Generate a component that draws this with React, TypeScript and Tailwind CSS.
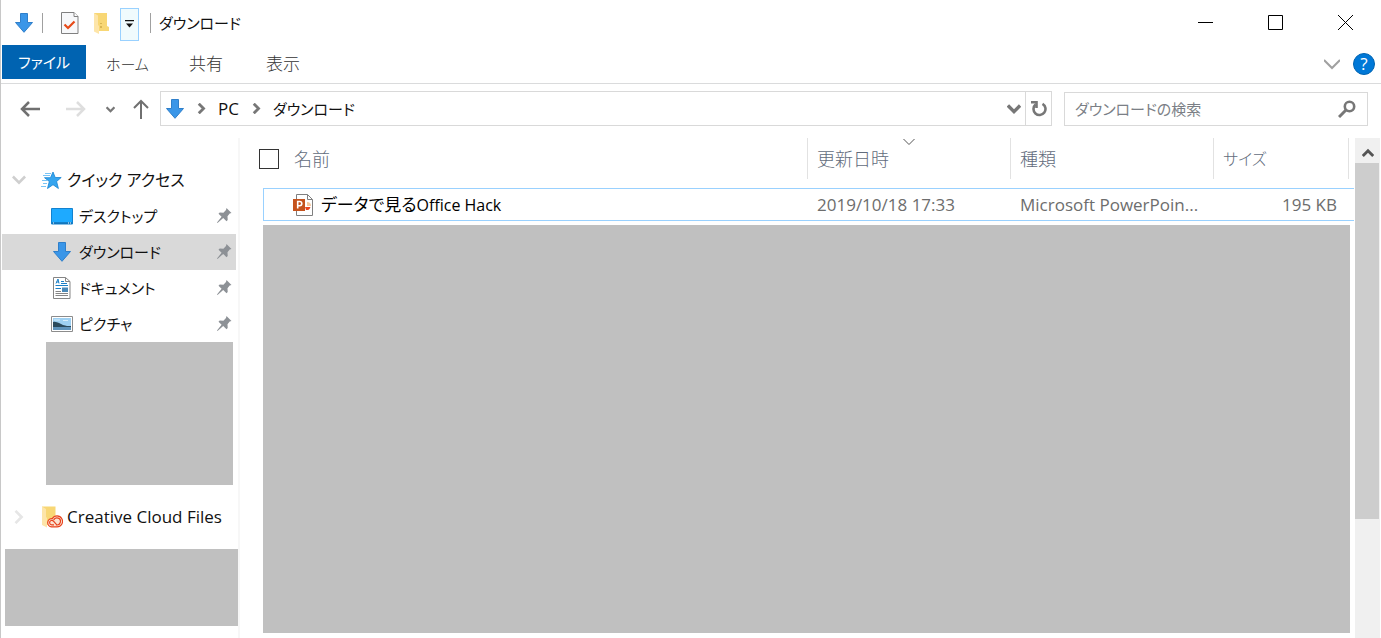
import type { ReactNode } from 'react'

const tabs = [
  { name: 'ホーム', size: 'w-[42px] text-[15px]' },
  { name: '共有', size: 'w-9 text-[17px]' },
  { name: '表示', size: 'w-9 text-[17px]' },
]

const DownloadIcon = () => (
  <svg className="h-5 w-[18px] shrink-0" viewBox="0 0 18 20">
    <path d="M5.5.5h7v9h5L9 19.3.5 9.5h5z" fill="#3a96e8" stroke="#2f7fca" />
  </svg>
)

const ChevronIcon = ({ d, size, color, stroke }: { d: string; size: string; color: string; stroke: number }) => (
  <svg className={`shrink-0 ${size} ${color}`} viewBox="0 0 16 16" fill="none" stroke="currentColor" strokeWidth={stroke}>
    <path d={d} />
  </svg>
)

const PropertiesIcon = () => (
  <svg className="h-[22px] w-[18px]" viewBox="0 0 18 22">
    <path d="M.5.5h12.5l4 4v17H.5z" fill="#f7f8fa" stroke="#808080" />
    <path d="M13 .5v4h4" fill="#fff" stroke="#808080" />
    <path d="m3.5 12.5 3.5 3.5 6.5-6.5" fill="none" stroke="#e64a19" strokeWidth="2.2" />
  </svg>
)

const FolderIcon = () => (
  <svg className="h-[22px] w-[15px]" viewBox="0 0 15 22">
    <path d="M0 1h13v13l2 1v4H4L0 19z" fill="#f8d775" />
    <path d="M0 1l4 2.5V13l1 1v8l-5-2.5z" fill="#fde5a9" />
    <path d="M7 11v1M7 14v2" stroke="#b79332" />
  </svg>
)

const CreativeCloudIcon = () => (
  <svg className="h-[22px] w-[21px]" viewBox="0 0 21 22">
    <path d="M0 .5h13.5V19H4z" fill="#f8d775" />
    <path d="M0 .5 4 3v8l1 1v9.5L0 19z" fill="#fde5a9" />
    <g fill="none" stroke="#e8441f" strokeWidth="1.2">
      <path d="M9.5 20.900a4 4 0 1 1 .8-8.300 5.500 5.500 0 1 1 4.700 8.300z" fill="#fbe3d2" />
      <path d="M12 18.800H9.800a2.200 2.200 0 1 1 1.900-3.300l3.100 3.300M11.700 14.100a3.500 3.500 0 1 1 2.300 4.700" />
    </g>
  </svg>
)

const StarIcon = () => (
  <svg className="h-5 w-[21px]" viewBox="0 0 21 20">
    <path d="m12 2 2.200 5.500h6l-4.600 4 1.800 7-5.400-3.800-5.500 3.800 1.800-7L3.500 7.700h6z" fill="#35a5ef" stroke="#1683d2" strokeWidth=".8" />
    <path d="M4 3.500h6M2 5.500h7M1 10.500h5M2 13.500h4M0 16.500h5" stroke="#79c4f5" />
  </svg>
)

const DesktopIcon = () => (
  <svg className="h-[17px] w-[22px]" viewBox="0 0 22 17">
    <path d="M.5.5h21v15.500H.5z" fill="#1eaaff" stroke="#1382cf" />
    <path d="M1 15h20" stroke="#0b5590" />
    <path d="M2 15h1M17 15h1M19 15h1" stroke="#fff" />
  </svg>
)

const DocumentIcon = () => (
  <svg className="h-[22px] w-[18px]" viewBox="0 0 18 22">
    <path d="M.5.5h12l4.500 4v17H.5z" fill="#fff" stroke="#858585" />
    <path d="M12.500.5v4H17" fill="none" stroke="#858585" />
    <path d="m3 6.500 2-4.500 1 4.500M3.500 5H6" fill="none" stroke="#1b7fc6" />
    <path d="M8 4.500h3M8 6.500h6M2.500 8.500H15M2.500 11.500H8" stroke="#1b7fc6" />
    <path d="M9 10.500h6v4.500H9z" fill="#4a89b8" />
    <path d="M2.500 14.500H8M2.500 16.500H15M2.500 18.500H15" stroke="#858585" />
  </svg>
)

const PictureIcon = () => (
  <svg className="h-4 w-[22px]" viewBox="0 0 22 16">
    <path d="M.5.5h21v15H.5z" fill="#fff" stroke="#8c8c8c" />
    <path d="M2 2h18v12H2z" fill="#9ed0f2" />
    <path d="M2 6c4-1 7 2 10 3s5 1 8 1v1.500H2z" fill="#2b4a5c" />
    <path d="M2 11h18v3H2z" fill="#5f93bb" />
    <path d="M3 4h6M12 4.500h5" stroke="#d8eefb" />
  </svg>
)

const PinIcon = () => (
  <svg className="h-4 w-[15px]" viewBox="0 0 15 16">
    <path d="m9.500 0 5 5-1.800.6-2.200 2.600.2 3.800-1.200 1.200-3.300-3.300L.5 15l-.5-.5 4.600-5.700L1.500 5.700 2.700 4.500l3.700.2L9 2z" fill="#8d9196" />
  </svg>
)

const PowerPointIcon = () => (
  <svg className="h-[22px] w-5 shrink-0" viewBox="0 0 20 22">
    <path d="M3.500.5h11l5 5v16h-16z" fill="#fff" stroke="#7f7f7f" />
    <path d="M14.500.5v5h5" fill="none" stroke="#7f7f7f" />
    <path d="M14 8a4 4 0 0 1 4 4h-4z" fill="#f6c9a0" />
    <path d="M12 13h5.500a4 4 0 0 1-4.500 3z" fill="#e8441f" />
    <path d="M0 5h12v12H0z" fill="#c5531d" />
    <path d="M4.700 14.500v-7h2a2 2 0 0 1 0 4.200h-2" fill="none" stroke="#fff" strokeWidth="1.600" />
  </svg>
)

const quickAccess: { name: string; icon: ReactNode; active?: boolean }[] = [
  { name: 'デスクトップ', icon: <DesktopIcon /> },
  { name: 'ダウンロード', icon: <DownloadIcon />, active: true },
  { name: 'ドキュメント', icon: <DocumentIcon /> },
  { name: 'ピクチャ', icon: <PictureIcon /> },
]

const TitleBar = () => (
  <header className="flex h-[45px] items-center pr-px">
    <div className="ml-[14px] flex flex-1 items-center">
      <DownloadIcon />
      <div className="ml-[9px] h-5 w-px bg-[#a0a0a0]" />
      <button type="button" aria-label="プロパティ" className="ml-[18px]">
        <PropertiesIcon />
      </button>
      <button type="button" aria-label="新しいフォルダー" className="ml-[15px]">
        <FolderIcon />
      </button>
      <button
        type="button"
        aria-label="クイック アクセス ツール バーのカスタマイズ"
        className="mt-[3px] ml-[11px] flex h-[33px] w-[19px] items-center justify-center border border-[#99d1ff] bg-[#f0fbfd]"
      >
        <svg className="h-2 w-[9px]" viewBox="0 0 9 8">
          <path d="M0 0h9v1.200H0zM1 3.500h7L4.500 7.500z" fill="#111" />
        </svg>
      </button>
      <div className="ml-[11px] h-5 w-px bg-[#a0a0a0]" />
      <h1 className="ml-2 text-[15px]">ダウンロード</h1>
    </div>
    <button type="button" aria-label="最小化" className="flex h-full w-[70px] items-center justify-center">
      <svg className="size-[15px]" viewBox="0 0 15 15" stroke="#000">
        <path d="M0 7.500h15" />
      </svg>
    </button>
    <button type="button" aria-label="最大化" className="flex h-full w-[70px] items-center justify-center">
      <svg className="size-[15px]" viewBox="0 0 15 15" fill="none" stroke="#000">
        <path d="M.5.5h14v14H.5z" />
      </svg>
    </button>
    <button type="button" aria-label="閉じる" className="flex h-full w-[70px] items-center justify-center">
      <svg className="size-[15px]" viewBox="0 0 15 15" stroke="#000">
        <path d="m0 0 15 15M15 0 0 15" />
      </svg>
    </button>
  </header>
)

const Ribbon = () => (
  <nav className="flex h-[39px] items-start border-b border-[#dadbdc] text-[#333]">
    <button type="button" className="ml-px h-[34px] w-[84px] bg-[#0063b1] text-[15px] text-white">
      ファイル
    </button>
    <div className="ml-5 flex h-[38px] flex-1 items-center gap-[41px] font-light">
      {tabs.map((tab) => (
        <button key={tab.name} type="button" className={`${tab.size} text-left whitespace-nowrap`}>
          {tab.name}
        </button>
      ))}
    </div>
    <div className="flex h-[38px] items-center gap-[13px] pr-[6px]">
      <button type="button" aria-label="リボンの展開">
        <ChevronIcon d="m0 4 8 8 8-8" size="size-4" color="text-[#a0a0a0]" stroke={2} />
      </button>
      <button type="button" aria-label="ヘルプ" className="size-[22px] rounded-full border border-[#0063b1] bg-[#0078d7] leading-5 text-white">
        ?
      </button>
    </div>
  </nav>
)

const AddressBar = () => (
  <div className="flex h-[54px] items-start pt-[7px] pr-[13px] text-[#777]">
    <div className="flex h-[35px] w-[159px] items-center pt-px pl-[19px]">
      <button type="button" aria-label="戻る">
        <svg className="h-4 w-5" viewBox="0 0 20 16" fill="none" stroke="#707070" strokeWidth="2.500">
          <path d="M20 8H2M9 1 2 8l7 7" />
        </svg>
      </button>
      <button type="button" aria-label="進む" className="ml-[26px]">
        <svg className="h-4 w-5" viewBox="0 0 20 16" fill="none" stroke="#dedede" strokeWidth="2.500">
          <path d="M0 8h18M11 1l7 7-7 7" />
        </svg>
      </button>
      <button type="button" aria-label="最近表示した場所" className="ml-5">
        <ChevronIcon d="m1 4 7 7 7-7" size="size-[9px]" color="text-[#777]" stroke={4} />
      </button>
      <button type="button" aria-label="上へ" className="ml-[18px]">
        <svg className="h-5 w-4" viewBox="0 0 16 20" fill="none" stroke="#707070" strokeWidth="2">
          <path d="M8 20V2M1 9l7-7 7 7" />
        </svg>
      </button>
    </div>
    <div className="flex h-[35px] flex-1 items-center border border-[#d9d9d9] pl-[5px] text-[#111]">
      <DownloadIcon />
      <ChevronIcon d="m4 1 7 7-7 7" size="ml-3 size-[11px]" color="text-[#777]" stroke={4} />
      <a href="#pc" className="ml-[11px]">
        PC
      </a>
      <ChevronIcon d="m4 1 7 7-7 7" size="ml-3 size-[11px]" color="text-[#777]" stroke={4} />
      <a href="#downloads" className="ml-[11px] flex-1 text-[15px]">
        ダウンロード
      </a>
      <button type="button" aria-label="以前の場所" className="mr-1">
        <ChevronIcon d="m1 4 7 7 7-7" size="size-[14px]" color="text-[#777]" stroke={4} />
      </button>
      <button type="button" aria-label="最新の情報に更新" className="flex h-full w-[26px] items-center justify-center border-l border-[#d9d9d9]">
        <svg className="size-4" viewBox="0 0 16 16" fill="none" stroke="#777" strokeWidth="2.600">
          <path d="M11.500 2.800A6 6 0 1 1 4.500 3.500" />
          <path d="M0 1.300h5.500V7" />
        </svg>
      </button>
    </div>
    <form className="mt-px ml-3 flex h-[34px] w-[304px] items-center border border-[#d9d9d9] pr-[11px] pl-[10px] text-[15px]">
      <input
        type="text"
        aria-label="検索"
        placeholder="ダウンロードの検索"
        className="min-w-0 flex-1 outline-none placeholder:text-[#7b7f86]"
      />
      <button type="button" aria-label="検索を実行">
        <svg className="size-[18px]" viewBox="0 0 18 18" fill="none" stroke="#777">
          <circle cx="11.500" cy="6.500" r="4.700" strokeWidth="2.600" />
          <path d="m8 10-7 7" strokeWidth="3" />
        </svg>
      </button>
    </form>
  </div>
)

const Sidebar = () => (
  <aside className="w-[239px] shrink-0 border-r-2 border-[#f7f7f7] pt-6">
    <div className="flex h-9 items-center pl-[11px]">
      <ChevronIcon d="m1 4 7 7 7-7" size="size-[14px]" color="text-[#cfcfcf]" stroke={3} />
      <div className="ml-[15px] w-[26px]">
        <StarIcon />
      </div>
      <a href="#quick" className="text-base">
        クイック アクセス
      </a>
    </div>
    <ul className="mr-[2px] ml-px">
      {quickAccess.map((item) => (
        <li key={item.name} className={`flex h-9 items-center pr-1 pl-[48px] ${item.active ? 'bg-[#d9d9d9]' : ''}`}>
          <div className="mr-[5px] flex w-6 justify-center">{item.icon}</div>
          <a href="#folder" className="flex-1 text-[15px]">
            {item.name}
          </a>
          <PinIcon />
        </li>
      ))}
    </ul>
    <div className="mr-[5px] ml-[45px] h-[143px] bg-[#c0c0c0]" />
    <div className="mt-[14px] flex h-9 items-center pl-[11px]">
      <ChevronIcon d="m4 1 7 7-7 7" size="size-[14px]" color="text-[#e6e6e6]" stroke={3} />
      <div className="ml-4 w-[25px]">
        <CreativeCloudIcon />
      </div>
      <a href="#creative-cloud" className="whitespace-nowrap">
        Creative Cloud Files
      </a>
    </div>
    <div className="mt-[14px] ml-1 h-[77px] bg-[#c0c0c0]" />
  </aside>
)

const FileList = () => (
  <section className="flex flex-1 flex-col pl-[23px]">
    <table className="w-full table-fixed border-separate border-spacing-0 text-left text-[#6d6d6d]">
      <colgroup>
        <col />
        <col className="w-[203px]" />
        <col className="w-[203px]" />
        <col className="w-[135px]" />
        <col className="w-[6px]" />
      </colgroup>
      <thead className="text-lg text-[#626c7c]">
        <tr>
          <th className="p-0 pb-[9px] font-light">
            <div className="-ml-1 flex h-10 items-center">
              <input type="checkbox" aria-label="すべて選択" className="size-5 appearance-none border border-[#333] bg-white" />
              <span className="ml-[15px]">名前</span>
            </div>
          </th>
          <th className="p-0 pb-[9px] font-light">
            <div className="relative flex h-[41px] items-center border-l border-[#e2e2e2] pl-[9px]">
              <div className="absolute inset-x-0 top-0 flex justify-center">
                <svg className="h-[7px] w-3" viewBox="0 0 12 7" fill="none" stroke="#555">
                  <path d="m.5 1 5.500 5.500L11.500 1" />
                </svg>
              </div>
              更新日時
            </div>
          </th>
          <th className="p-0 pb-[9px] font-light">
            <div className="flex h-[41px] items-center border-l border-[#e2e2e2] pl-[9px]">種類</div>
          </th>
          <th className="p-0 pb-[9px] text-base font-light">
            <div className="flex h-[41px] items-center border-l border-[#e2e2e2] pl-[9px]">サイズ</div>
          </th>
          <th className="p-0 pb-[9px]">
            <div className="h-[41px] border-l border-[#e2e2e2]" />
          </th>
        </tr>
      </thead>
      <tbody>
        <tr className="h-[33px]">
          <td className="border-y border-l border-[#99d1ff] p-0 pl-[29px] text-black">
            <div className="flex items-center gap-2">
              <PowerPointIcon />
              <span>
                データで見る<span className="text-base">Office Hack</span>
              </span>
            </div>
          </td>
          <td className="border-y border-[#99d1ff] p-0 pt-px pl-[10px]">2019/10/18 17:33</td>
          <td className="border-y border-[#99d1ff] p-0 pt-px pl-[10px]">Microsoft PowerPoin...</td>
          <td colSpan={2} className="border-y border-[#99d1ff] p-0 pt-px pr-[17px] text-right">
            195 KB
          </td>
        </tr>
      </tbody>
    </table>
    <div className="mt-1 mr-1 mb-[5px] flex-1 bg-[#c0c0c0]" />
  </section>
)

const ScrollBar = () => (
  <div className="mr-px ml-px flex w-[25px] shrink-0 flex-col bg-[#f0f0f0]">
    <button type="button" aria-label="上へスクロール" className="flex h-[25px] items-center justify-center pt-1">
      <ChevronIcon d="m1 12 7-7 7 7" size="size-3" color="text-[#555]" stroke={4} />
    </button>
    <div className="mr-px grow-[3] bg-[#cdcdcd]" />
    <div className="grow" />
  </div>
)

const App = () => {
  return (
    <div className="flex min-h-screen flex-col border-l border-[#c8c8c8] bg-white font-['Open_Sans','Noto_Sans_CJK_JP',sans-serif] text-[17px] leading-6 text-[#111] [font-feature-settings:'palt']">
      <TitleBar />
      <Ribbon />
      <AddressBar />
      <main className="flex flex-1">
        <Sidebar />
        <FileList />
        <ScrollBar />
      </main>
    </div>
  )
}

export default App
